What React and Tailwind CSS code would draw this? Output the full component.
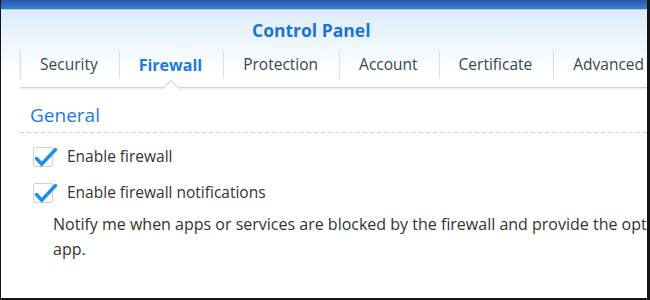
import React from 'react';

const tabs = ['Security', 'Firewall', 'Protection', 'Account', 'Certificate', 'Advanced'];

const Tab = ({ label, active }) => (
  <div className="relative h-[37px]">
    <div
      className={
        'h-[29px] flex items-center border-l border-[#d6e0ea] pl-[19px] pr-[21px] whitespace-nowrap ' +
        (active ? 'text-[16px] font-bold text-[#1b7bdc]' : 'text-[15.5px] text-[#3b4550]')
      }
    >
      {label}
    </div>
    {active && (
      <div className="absolute left-1/2 bottom-[-6px] w-[11px] h-[11px] -translate-x-1/2 rotate-45 bg-white border-l border-t border-[#d2d2d2]" />
    )}
  </div>
);

const Check = ({ label }) => (
  <div className="flex items-center h-[20px]">
    <div className="relative w-[20px] h-[20px] rounded-[2px] border border-[#c9d2db] bg-white shrink-0">
      <svg className="absolute left-[-1px] top-[-1px] overflow-visible" width="20" height="20" viewBox="0 0 20 20">
        <polyline points="3.5,11.5 8.7,17.2 22.5,2.5" fill="none" stroke="#1d8ded" strokeWidth="3.4" strokeLinecap="round" strokeLinejoin="miter" />
      </svg>
    </div>
    <span className="ml-[14px] text-[15.5px] text-[#333333]">{label}</span>
  </div>
);

export default function App() {
  return (
    <div className="w-[650px] h-[300px] bg-[#151515] pl-px pr-[3px] pb-[2px]">
      <div className="h-full bg-white overflow-hidden flex flex-col font-['Open_Sans',sans-serif]">
        <div className="h-[9px] shrink-0 bg-gradient-to-b from-[#2858a8] to-[#3a7dd6]" />
        <div className="h-px shrink-0 bg-[#a4d2f6]" />
        <div className="shrink-0 bg-[linear-gradient(to_bottom,#dcecfa,#ffffff_80%)]">
          <div className="h-[40px] flex items-center pl-[251px]">
            <span className="text-[17.5px] font-bold text-[#1b74d4]">Control Panel</span>
          </div>
          <div className="ml-[19px] flex border-b border-[#d2d2d2] shadow-[0_1px_2px_rgba(0,0,0,0.10)]">
            {tabs.map((t) => (
              <Tab key={t} label={t} active={t === 'Firewall'} />
            ))}
          </div>
        </div>
        <div className="ml-[19px]">
          <div className="h-[44px] pt-[10px] pl-[10px] flex items-center text-[19px] text-[#1f7ae0]">General</div>
          <div className="h-px bg-[repeating-linear-gradient(to_right,#c3d3e4_0_4px,transparent_4px_7px)]" />
          <div className="pl-[13px] pt-[14px] flex flex-col gap-[16px]">
            <Check label="Enable firewall" />
            <Check label="Enable firewall notifications" />
          </div>
          <p className="pl-[33px] mt-[9px] text-[16px] leading-[25px] text-[#333333] whitespace-nowrap">
            Notify me when apps or services are blocked by the firewall and provide the option to allow the
            <br />
            app.
          </p>
        </div>
      </div>
    </div>
  );
}
